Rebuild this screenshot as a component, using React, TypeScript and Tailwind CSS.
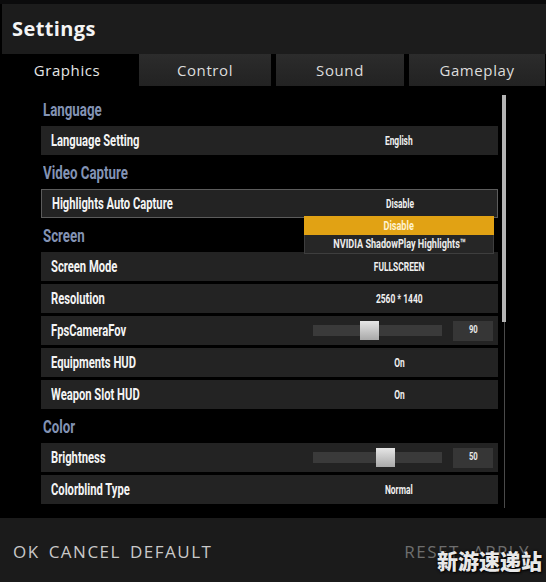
import React from 'react';

// narrow game-ui face: Roboto squeezed horizontally
function Cond({ children, className = '', center = false }: { children: React.ReactNode; className?: string; center?: boolean }) {
  return (
    <span
      className={`inline-block whitespace-nowrap font-['Roboto',sans-serif] font-bold scale-x-[0.7] ${
        center ? 'origin-center' : 'origin-left'
      } ${className}`}
    >
      {children}
    </span>
  );
}

type Row = { label: string; value?: string; slider?: number; pos?: number };

const sections: { title: string; rows: Row[] }[] = [
  { title: 'Language', rows: [{ label: 'Language Setting', value: 'English' }] },
  { title: 'Video Capture', rows: [{ label: 'Highlights Auto Capture', value: 'Disable' }] },
  {
    title: 'Screen',
    rows: [
      { label: 'Screen Mode', value: 'FULLSCREEN' },
      { label: 'Resolution', value: '2560 * 1440' },
      { label: 'FpsCameraFov', slider: 90, pos: 47 },
      { label: 'Equipments HUD', value: 'On' },
      { label: 'Weapon Slot HUD', value: 'On' },
    ],
  },
  {
    title: 'Color',
    rows: [
      { label: 'Brightness', slider: 50, pos: 63 },
      { label: 'Colorblind Type', value: 'Normal' },
    ],
  },
];

function SettingRow({ row }: { row: Row }) {
  const open = row.label === 'Highlights Auto Capture';
  return (
    <div
      className={`relative h-[29px] mt-[3px] first:mt-0 flex items-center bg-[#232323] ${
        open ? 'border border-[#5c5c5c] bg-[#1e1e1e]' : ''
      }`}
    >
      <div className="pl-[10px] w-[272px] text-[16px] text-[#f4f4f4]">
        <Cond>{row.label}</Cond>
      </div>
      {row.slider !== undefined ? (
        <div className="flex items-center">
          <div className="relative w-[129px] h-[11px] bg-[#3a3a3a]">
            <div
              className="absolute top-[-4px] w-[19px] h-[19px] bg-gradient-to-b from-[#e6e6e6] to-[#a9a9a9]"
              style={{ left: row.pos }}
            />
          </div>
          <div className="ml-[11px] w-[40px] h-[20px] bg-[#363636] flex items-center justify-center text-[11px] text-[#e8e8e8]">
            <Cond center>{row.slider}</Cond>
          </div>
        </div>
      ) : (
        <div className="w-[172px] text-center text-[12px] text-[#f0f0f0]">
          <Cond center>{row.value}</Cond>
        </div>
      )}
      {open && (
        <div className="absolute left-[262px] top-[26px] w-[190px] z-10 text-[13px]">
          <div className="h-[19px] bg-[#e1a214] text-[#fff3cf] flex items-center justify-center">
            <Cond center>Disable</Cond>
          </div>
          <div className="h-[19px] bg-[#262626] border border-t-0 border-[#3e3e3e] text-[#ececec] flex items-center justify-center">
            <Cond center>NVIDIA ShadowPlay Highlights™</Cond>
          </div>
        </div>
      )}
    </div>
  );
}

export default function App() {
  const tabs = [
    { name: 'Graphics', w: 'w-[134px]', active: true },
    { name: 'Control', w: 'w-[132px]' },
    { name: 'Sound', w: 'w-[128px]' },
    { name: 'Gameplay', w: 'w-[136px]' },
  ];

  return (
    <div className="w-[546px] h-[582px] bg-black flex flex-col overflow-hidden font-['Open_Sans',sans-serif]">
      {/* Header */}
      <div className="h-[4px] bg-[#0b0b0c]" />
      <div className="h-[50px] ml-[2px] bg-[#1c1c1c] flex items-center pl-[10px]">
        <h1 className="text-[20px] font-bold text-[#f4f4f4] tracking-[0.4px]">Settings</h1>
      </div>

      {/* Tabs */}
      <div className="h-[32px] flex gap-[5px]">
        {tabs.map(t => (
          <div
            key={t.name}
            className={`${t.w} flex items-center justify-center text-[15px] tracking-[0.6px] ${
              t.active ? 'bg-black text-[#e6e6e6]' : 'bg-gradient-to-b from-[#2c2c2c] to-[#222] text-[#dcdcdc]'
            }`}
          >
            {t.name}
          </div>
        ))}
      </div>

      {/* Content */}
      <div className="flex-1 flex pt-[9px] pl-[41px]">
        <div className="w-[457px]">
          {sections.map(s => (
            <div key={s.title} className="mt-[3px] first:mt-0">
              <div className="h-[31px] flex items-center pl-[2px] text-[19px] text-[#8393b4]">
                <Cond>{s.title}</Cond>
              </div>
              <div>
                {s.rows.map(r => (
                  <SettingRow key={r.label} row={r} />
                ))}
              </div>
            </div>
          ))}
        </div>
        {/* Scrollbar */}
        <div className="ml-[4px] w-[4px] flex flex-col pb-[8px]">
          <div className="h-[227px] bg-[#b4b4b4]" />
          <div className="flex-1 w-[1px] ml-[2px] bg-[#4a4a4a]" />
        </div>
      </div>

      {/* Footer */}
      <div className="relative h-[64px] mt-[2px] bg-[#1b1b1b] flex items-center justify-between pl-[13px] pr-[16px] pt-[4px] text-[17px] tracking-[1.5px]">
        <div className="flex gap-[9px] text-[#c9c9c9]">
          <span>OK</span>
          <span>CANCEL</span>
          <span>DEFAULT</span>
        </div>
        <div className="flex gap-[13px] text-[#6e6e6e]">
          <span>RESET</span>
          <span>APPLY</span>
        </div>
        <span className="absolute right-[4px] bottom-[6px] text-[21px] font-black tracking-[0px] text-[#e8e8e8] font-['Noto_Sans_CJK_SC',sans-serif] [text-shadow:0_0_3px_#000,1px_1px_2px_#000]">
          新游速递站
        </span>
      </div>
    </div>
  );
}
